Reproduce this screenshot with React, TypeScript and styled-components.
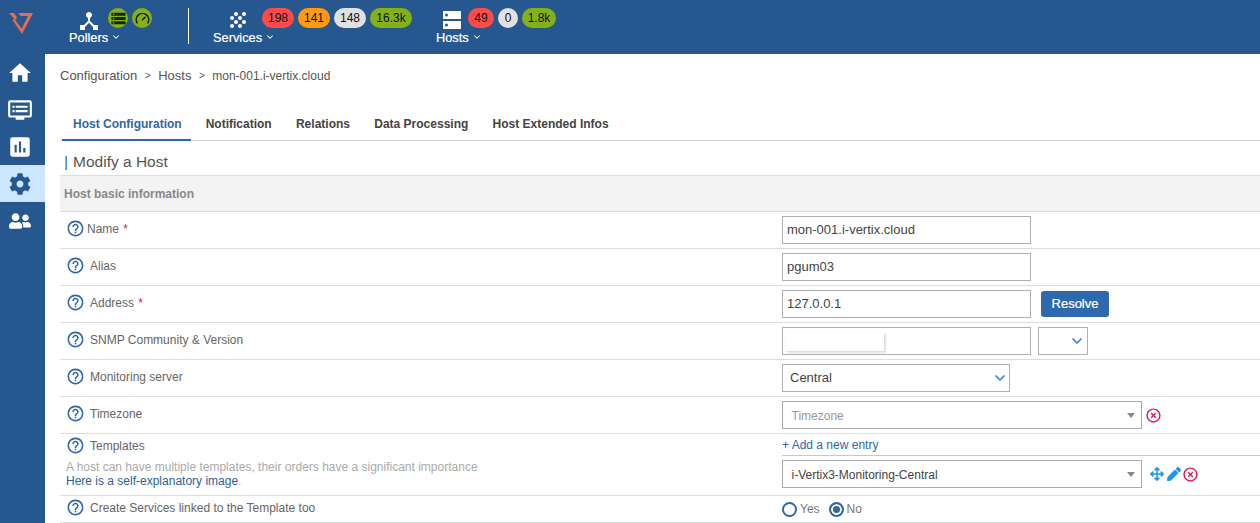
import React from 'react';
import styled, { createGlobalStyle } from 'styled-components';
import { ChevronDown, Gauge } from 'lucide-react';
import { FaCog, FaUserFriends, FaArrowsAlt, FaPen } from 'react-icons/fa';
import { MdHome, MdDvr, MdAssessment, MdDeviceHub, MdHelpOutline, MdHighlightOff, MdStorage } from 'react-icons/md';

const GlobalStyle = createGlobalStyle`
  html, body {
    margin: 0;
    height: 100%;
    overflow: hidden;
    background: #fff;
    font-family: "Liberation Sans", Arial, sans-serif;
  }
  * { box-sizing: border-box; }
`;

const Page = styled.div`
  display: flex;
  flex-direction: column;
  height: 523px;
  overflow: hidden;
`;

const TopBar = styled.header`
  display: flex;
  align-items: flex-start;
  gap: 24px;
  height: 54px;
  flex-shrink: 0;
  background: #26588f;
`;

const LogoCell = styled.div`
  width: 45px;
  height: 54px;
  padding: 13px 0 0 9px;
  flex-shrink: 0;
`;

const NavGroup = styled.div`
  display: grid;
  grid-template-columns: auto auto;
  grid-template-rows: 20px 18px;
  padding-top: 8px;
`;

const NavIcon = styled.div<{ $width: number }>`
  width: ${({ $width }) => $width}px;
  height: 24px;
  padding-top: 3px;
  display: flex;
  align-items: flex-start;
  justify-content: center;
  color: #fff;
`;

const HubIcon = styled(MdDeviceHub)`
  margin-top: -2px;
`;

const Pills = styled.div`
  display: flex;
  gap: 4px;
`;

const Pill = styled.span<{ $bg: string; $width: number }>`
  display: flex;
  align-items: center;
  justify-content: center;
  width: ${({ $width }) => $width}px;
  height: 20px;
  border-radius: 10px;
  background: ${({ $bg }) => $bg};
  color: #111;
  font-size: 12px;
`;

const RoundIcon = styled(Pill)`
  color: #16240a;
`;

const NavLabel = styled.div`
  grid-column: 1 / span 2;
  grid-row: 2;
  display: flex;
  align-items: center;
  gap: 3px;
  color: #fff;
  font-size: 12.8px;
  -webkit-text-stroke: 0.2px #fff;
  height: 18px;
`;

const Divider = styled.div`
  width: 1px;
  height: 36px;
  margin: 8px 0 0 12px;
  background: #fff;
`;

const Body = styled.div`
  display: flex;
  flex: 1;
  min-height: 0;
`;

const Sidebar = styled.nav`
  width: 45px;
  flex-shrink: 0;
  background: #26588f;
`;

const SideItem = styled.div<{ $active?: boolean }>`
  height: 37px;
  display: flex;
  align-items: center;
  justify-content: center;
  padding-right: 5px;
  color: ${({ $active }) => ($active ? '#26588f' : '#fff')};
  background: ${({ $active }) => ($active ? '#cbe6ff' : 'transparent')};
`;

const Main = styled.main`
  flex: 1;
  min-width: 0;
  padding-left: 15px;
`;

const Breadcrumb = styled.div`
  display: flex;
  align-items: center;
  height: 43px;
  color: #555;
  font-size: 12px;
`;

const Crumb = styled.span<{ $large?: boolean }>`
  color: #555;
  font-size: ${({ $large }) => ($large ? '13px' : '12px')};
`;

const CrumbSep = styled.span`
  margin: 0 7.5px;
  font-size: 10px;
`;

const Tabs = styled.div`
  display: flex;
  height: 44px;
  border-bottom: 1px solid #d0d0d0;
  padding-left: 2px;
`;

const Tab = styled.div<{ $active?: boolean }>`
  display: flex;
  align-items: flex-end;
  height: 44px;
  padding: 0 ${({ $active }) => ($active ? '9px 8px 11px' : '0 10px')};
  margin-right: ${({ $active }) => ($active ? '15px' : '24.3px')};
  font-size: 12px;
  font-weight: 700;
  color: ${({ $active }) => ($active ? '#2e67a8' : '#444')};
  border-bottom: ${({ $active }) => ($active ? '2px solid #2e67a8' : 'none')};
`;

const PageTitle = styled.h1`
  margin: 0;
  height: 34px;
  display: flex;
  align-items: center;
  padding: 7px 0 0 4px;
  font-size: 15.5px;
  font-weight: 400;
  color: #555;
`;

const TitleBar = styled.span`
  color: #2e67a8;
  margin-right: 5px;
`;

const SectionHeader = styled.div`
  height: 37px;
  display: flex;
  align-items: center;
  padding-left: 4px;
  background: #f3f3f3;
  border-top: 1px solid #ddd;
  border-bottom: 1px solid #ddd;
  color: #888;
  font-size: 12px;
  font-weight: 700;
`;

const Row = styled.div<{ $height?: number }>`
  display: grid;
  grid-template-columns: 722px 1fr;
  height: ${({ $height }) => $height ?? 37}px;
  border-bottom: 1px solid #ddd;
`;

const LabelCell = styled.div<{ $top?: boolean }>`
  display: flex;
  flex-direction: column;
  justify-content: ${({ $top }) => ($top ? 'flex-start' : 'center')};
  padding: ${({ $top }) => ($top ? '3px 0 0 6px' : '0 0 2px 6px')};
`;

const LabelLine = styled.div<{ $tight?: boolean }>`
  display: flex;
  align-items: center;
  gap: ${({ $tight }) => ($tight ? '2px' : '5px')};
  color: #666;
  font-size: 12px;
`;

const HelpIcon = styled(MdHelpOutline)`
  color: #2e67a8;
  flex-shrink: 0;
  margin-top: -1px;
`;

const Required = styled.span`
  color: #e8103a;
  margin-left: 1px;
`;

const Hint = styled.div`
  margin: 5px 0 0 0;
  color: #aaa;
  font-size: 12px;
  line-height: 14px;
`;

const HintLink = styled.span`
  color: #2b5f9e;
`;

const FieldCell = styled.div`
  display: flex;
  align-items: center;
`;

const StackCell = styled.div`
  display: flex;
  flex-direction: column;
`;

const TextInput = styled.input`
  width: 249px;
  height: 28px;
  padding: 0 4px 2px;
  border: 1px solid #b0b0b0;
  border-radius: 0;
  outline: none;
  color: #444;
  font-family: inherit;
  font-size: 13px;
  background: #fff;
`;

const ResolveButton = styled.button`
  width: 68px;
  height: 26px;
  margin-left: 10px;
  padding: 0 0 2px;
  border: none;
  border-radius: 3px;
  background: #2f69ad;
  color: #fff;
  font-family: inherit;
  font-size: 13px;
  -webkit-text-stroke: 0.2px #fff;
`;

const InputFrame = styled.div`
  position: relative;
  width: 249px;
  height: 28px;
  border: 1px solid #b0b0b0;
`;

const AutofillCard = styled.div`
  position: absolute;
  left: 2px;
  top: 4px;
  width: 99px;
  height: 19px;
  background: #fff;
  box-shadow: 0 0 1px rgba(0, 0, 0, 0.12), 2px 2px 2px rgba(0, 0, 0, 0.12);
`;

const NativeSelect = styled.div<{ $width: number; $gap?: number; $pad?: number }>`
  display: flex;
  align-items: center;
  justify-content: space-between;
  width: ${({ $width }) => $width}px;
  height: 28px;
  margin-left: ${({ $gap }) => $gap ?? 0}px;
  padding: 0 ${({ $pad }) => $pad ?? 1}px 2px 7px;
  border: 1px solid #b0b0b0;
  color: #444;
  font-size: 13px;
`;

const SelectChevron = styled(ChevronDown)`
  color: #3f78d8;
  margin-top: 1px;
`;

const ComboBox = styled.div`
  display: flex;
  align-items: center;
  justify-content: space-between;
  width: 360px;
  height: 28px;
  padding: 1px 6px 0 8.5px;
  border: 1px solid #aaa;
  font-size: 12px;
  color: #444;
`;

const ComboPlaceholder = styled.span`
  color: #999;
`;

const Caret = styled.span`
  width: 0;
  height: 0;
  border-left: 4px solid transparent;
  border-right: 4px solid transparent;
  border-top: 5px solid #888;
`;

const RemoveIcon = styled(MdHighlightOff)`
  color: #e6164c;
`;

const ActionIcons = styled.div`
  display: flex;
  align-items: center;
  gap: 3px;
  margin-left: 8px;
  color: #1c9ce0;
`;

const RemoveSlot = styled.div<{ $gap?: number }>`
  display: flex;
  margin-left: ${({ $gap }) => $gap ?? 3}px;
`;

const AddEntry = styled.div`
  height: 22px;
  display: flex;
  align-items: center;
  border-bottom: 1px solid #c8c8c8;
  color: #2e67a8;
  font-size: 12px;
`;

const TemplateLine = styled.div`
  display: flex;
  align-items: center;
  margin-top: 4px;
`;

const RadioRow = styled.div`
  display: flex;
  align-items: center;
  gap: 9px;
  color: #777;
  font-size: 12px;
`;

const RadioOption = styled.label`
  display: flex;
  align-items: center;
  gap: 3px;
`;

const RadioMark = styled.span<{ $checked?: boolean }>`
  width: 15px;
  height: 15px;
  border-radius: 50%;
  border: 2px solid #2e67a8;
  background: ${({ $checked }) => ($checked ? '#2e67a8' : '#fff')};
  box-shadow: ${({ $checked }) => ($checked ? 'inset 0 0 0 2px #fff' : 'none')};
`;

const Logo = () => (
  <svg width="24" height="21" viewBox="0 0 24 21" fill="#ec6a52">
    <path d="M0 0 L5 0 L8 4.5 L6.5 7 Z" />
    <path d="M3.5 7 L5 5.5 L13 16 L13 21 Z" />
    <path d="M9.5 0 L24 0 L13 21 L13 15 L19 3 L11.5 3 Z" />
  </svg>
);

const dots = [
  [7, 3], [15, 3], [3, 7], [11, 7], [7, 11], [15, 11], [3, 15], [11, 15],
];

const ServicesIcon = () => (
  <svg width="18" height="18" viewBox="0 0 18 18" fill="#fff">
    {dots.map(([cx, cy]) => <circle key={`${cx}-${cy}`} cx={cx} cy={cy} r="2" />)}
  </svg>
);

const HostsIcon = () => (
  <svg width="18" height="18" viewBox="0 0 18 18">
    <rect x="0" y="0" width="18" height="8" fill="#fff" />
    <rect x="0" y="10" width="18" height="8" fill="#fff" />
    <circle cx="3.5" cy="4" r="1.5" fill="#26588f" />
    <circle cx="3.5" cy="14" r="1.5" fill="#26588f" />
  </svg>
);

const Help = () => <HelpIcon size={19} />;

const Chevron = () => <ChevronDown size={10} strokeWidth={2.5} color="#fff" />;

export default function App() {
  return (
    <Page>
      <GlobalStyle />
      <TopBar>
        <LogoCell><Logo /></LogoCell>
        <NavGroup>
          <NavIcon $width={39}><HubIcon size={24} /></NavIcon>
          <Pills>
            <RoundIcon $bg="#84b118" $width={20}><MdStorage size={17} /></RoundIcon>
            <RoundIcon $bg="#84b118" $width={20}><Gauge size={15} strokeWidth={2.6} /></RoundIcon>
          </Pills>
          <NavLabel>Pollers <Chevron /></NavLabel>
        </NavGroup>
        <Divider />
        <NavGroup>
          <NavIcon $width={49}><ServicesIcon /></NavIcon>
          <Pills>
            <Pill $bg="#ff4a4a" $width={32}>198</Pill>
            <Pill $bg="#ff9913" $width={32}>141</Pill>
            <Pill $bg="#e1e1e1" $width={32}>148</Pill>
            <Pill $bg="#84b118" $width={42}>16.3k</Pill>
          </Pills>
          <NavLabel>Services <Chevron /></NavLabel>
        </NavGroup>
        <NavGroup>
          <NavIcon $width={32}><HostsIcon /></NavIcon>
          <Pills>
            <Pill $bg="#ff4a4a" $width={26}>49</Pill>
            <Pill $bg="#e1e1e1" $width={20}>0</Pill>
            <Pill $bg="#84b118" $width={34}>1.8k</Pill>
          </Pills>
          <NavLabel>Hosts <Chevron /></NavLabel>
        </NavGroup>
      </TopBar>
      <Body>
        <Sidebar>
          <SideItem><MdHome size={26} /></SideItem>
          <SideItem><MdDvr size={26} /></SideItem>
          <SideItem><MdAssessment size={26} /></SideItem>
          <SideItem $active><FaCog size={22} /></SideItem>
          <SideItem><FaUserFriends size={22} /></SideItem>
        </Sidebar>
        <Main>
          <Breadcrumb>
            <Crumb $large>Configuration</Crumb>
            <CrumbSep>&gt;</CrumbSep>
            <Crumb $large>Hosts</Crumb>
            <CrumbSep>&gt;</CrumbSep>
            <Crumb>mon-001.i-vertix.cloud</Crumb>
          </Breadcrumb>
          <Tabs>
            <Tab $active>Host Configuration</Tab>
            <Tab>Notification</Tab>
            <Tab>Relations</Tab>
            <Tab>Data Processing</Tab>
            <Tab>Host Extended Infos</Tab>
          </Tabs>
          <PageTitle><TitleBar>|</TitleBar>Modify a Host</PageTitle>
          <SectionHeader>Host basic information</SectionHeader>
          <Row>
            <LabelCell><LabelLine $tight><Help /><span>Name <Required>*</Required></span></LabelLine></LabelCell>
            <FieldCell><TextInput readOnly value="mon-001.i-vertix.cloud" /></FieldCell>
          </Row>
          <Row>
            <LabelCell><LabelLine><Help />Alias</LabelLine></LabelCell>
            <FieldCell><TextInput readOnly value="pgum03" /></FieldCell>
          </Row>
          <Row>
            <LabelCell><LabelLine><Help /><span>Address <Required>*</Required></span></LabelLine></LabelCell>
            <FieldCell>
              <TextInput readOnly value="127.0.0.1" />
              <ResolveButton>Resolve</ResolveButton>
            </FieldCell>
          </Row>
          <Row>
            <LabelCell><LabelLine><Help />SNMP Community &amp; Version</LabelLine></LabelCell>
            <FieldCell>
              <InputFrame><AutofillCard /></InputFrame>
              <NativeSelect $width={50} $gap={7} $pad={2}><span /><SelectChevron size={16} strokeWidth={2.5} /></NativeSelect>
            </FieldCell>
          </Row>
          <Row>
            <LabelCell><LabelLine><Help />Monitoring server</LabelLine></LabelCell>
            <FieldCell>
              <NativeSelect $width={228}>Central<SelectChevron size={16} strokeWidth={2.5} /></NativeSelect>
            </FieldCell>
          </Row>
          <Row>
            <LabelCell><LabelLine><Help />Timezone</LabelLine></LabelCell>
            <FieldCell>
              <ComboBox><ComboPlaceholder>Timezone</ComboPlaceholder><Caret /></ComboBox>
              <RemoveSlot><RemoveIcon size={17} /></RemoveSlot>
            </FieldCell>
          </Row>
          <Row $height={62}>
            <LabelCell $top>
              <LabelLine><Help />Templates</LabelLine>
              <Hint>
                A host can have multiple templates, their orders have a significant importance<br />
                <HintLink>Here is a self-explanatory image</HintLink>.
              </Hint>
            </LabelCell>
            <StackCell>
              <AddEntry>+ Add a new entry</AddEntry>
              <TemplateLine>
                <ComboBox>i-Vertix3-Monitoring-Central<Caret /></ComboBox>
                <ActionIcons>
                  <FaArrowsAlt size={14} />
                  <FaPen size={14} />
                </ActionIcons>
                <RemoveSlot $gap={1}><RemoveIcon size={17} /></RemoveSlot>
              </TemplateLine>
            </StackCell>
          </Row>
          <Row $height={27}>
            <LabelCell><LabelLine><Help />Create Services linked to the Template too</LabelLine></LabelCell>
            <FieldCell>
              <RadioRow>
                <RadioOption><RadioMark />Yes</RadioOption>
                <RadioOption><RadioMark $checked />No</RadioOption>
              </RadioRow>
            </FieldCell>
          </Row>
        </Main>
      </Body>
    </Page>
  );
}
